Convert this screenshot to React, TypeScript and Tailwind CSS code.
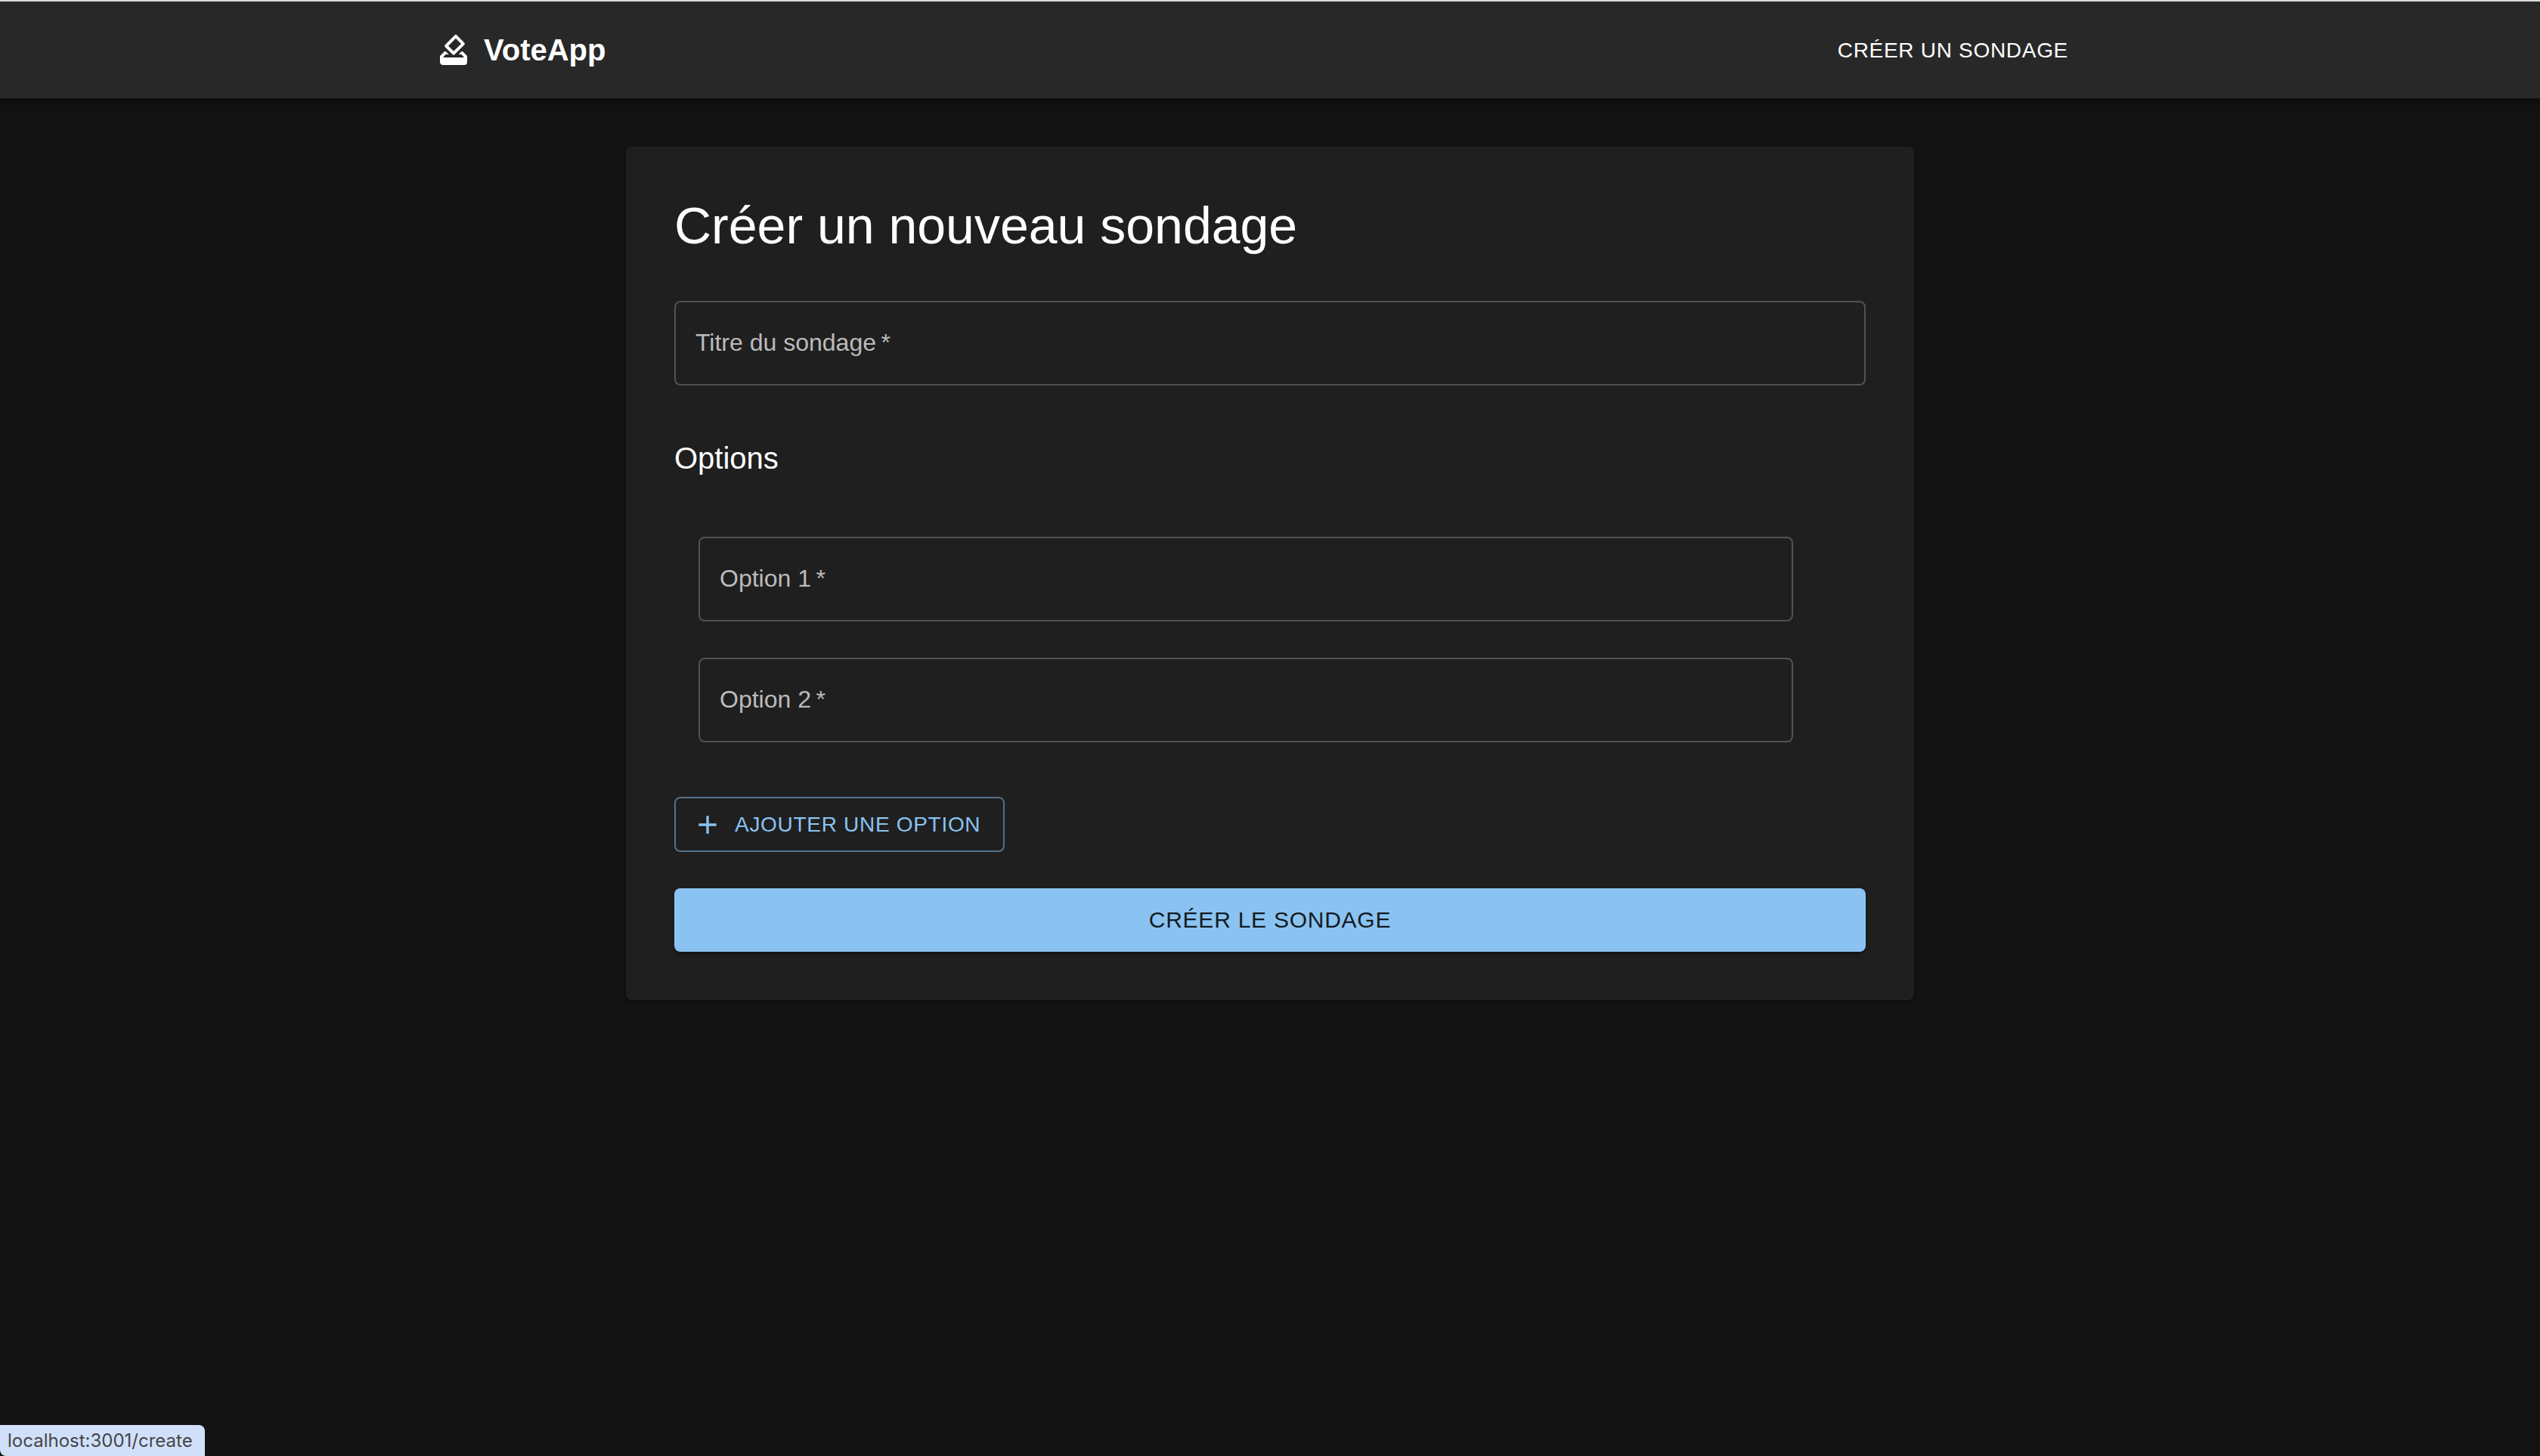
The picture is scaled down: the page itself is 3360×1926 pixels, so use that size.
import { MdAdd, MdHowToVote } from 'react-icons/md';

type FieldProps = { id: string; label: string };

function TextField({ id, label }: FieldProps) {
  return (
    <div className="relative">
      <input
        id={id}
        type="text"
        required
        placeholder=" "
        className="peer block w-full rounded-lg border-2 border-[#525252] bg-transparent px-[26px] py-[31px] text-[32px] leading-[46px] text-white outline-none focus:border-[#8ac3f1]"
      />
      <label
        htmlFor={id}
        className="pointer-events-none absolute top-8 left-7 text-[32px] leading-[46px] text-[#bbbbbb] peer-focus:invisible peer-[:not(:placeholder-shown)]:invisible"
      >
        {label}
        <span aria-hidden="true">{'\u2009*'}</span>
      </label>
    </div>
  );
}

const options = ['Option 1', 'Option 2'];

export default function App() {
  return (
    <div className="min-h-screen bg-[#131313] font-['Liberation_Sans',Arial,sans-serif] text-white">
      <header className="relative z-10 border-t-2 border-[#dcdddf] bg-[#282828] shadow-[0_4px_8px_-2px_rgba(0,0,0,0.2),0_8px_10px_rgba(0,0,0,0.14),0_2px_20px_rgba(0,0,0,0.12)]">
        <div className="mx-auto flex h-32 max-w-[2400px] items-center justify-between px-24">
          <a href="/" className="flex items-center gap-4 text-[40px] leading-[64px] font-bold">
            <MdHowToVote className="size-12" aria-hidden="true" />
            VoteApp
          </a>
          <a href="/create" className="mr-8 rounded-lg px-4 py-3 text-[28px] leading-[49px] tracking-wide uppercase">
            Créer un sondage
          </a>
        </div>
      </header>

      <main className="mx-auto max-w-[1800px] px-12 py-16">
        <section className="rounded-lg bg-[#1f1f1f] p-16 shadow-[0_4px_2px_-2px_rgba(0,0,0,0.2),0_2px_2px_rgba(0,0,0,0.14),0_2px_6px_rgba(0,0,0,0.12)]">
          <h1 className="text-[68px] leading-[80px]">Créer un nouveau sondage</h1>
          <form className="mt-[60px]" onSubmit={(e) => e.preventDefault()}>
            <TextField id="title" label="Titre du sondage" />
            <h2 className="mt-16 text-[40px] leading-[64px]">Options</h2>
            <ul className="mt-[72px] flex flex-col gap-12 pr-24 pl-8">
              {options.map((label, i) => (
                <li key={label}>
                  <TextField id={`option-${i + 1}`} label={label} />
                </li>
              ))}
            </ul>
            <button
              type="button"
              className="mt-[72px] flex items-center gap-4 rounded-lg border-2 border-[#537089] py-[10px] pr-[30px] pl-[22px] text-[28px] leading-[49px] tracking-wide text-[#8ac3f1] uppercase"
            >
              <MdAdd className="size-10" aria-hidden="true" />
              Ajouter une option
            </button>
            <button
              type="submit"
              className="mt-12 block w-full rounded-lg bg-[#8ac3f1] py-4 text-[30px] leading-[52px] tracking-wide text-[#131b21] uppercase shadow-[0_6px_2px_-4px_rgba(0,0,0,0.2),0_4px_4px_rgba(0,0,0,0.14),0_2px_10px_rgba(0,0,0,0.12)]"
            >
              Créer le sondage
            </button>
          </form>
        </section>
      </main>

      <div className="fixed bottom-0 left-0 rounded-tr-lg rounded-bl-lg bg-[#d0e0fa] pr-4 pl-2.5 font-[Inter,sans-serif] text-[24px] leading-[41px] text-[#454545]">
        localhost:3001/create
      </div>
    </div>
  );
}
